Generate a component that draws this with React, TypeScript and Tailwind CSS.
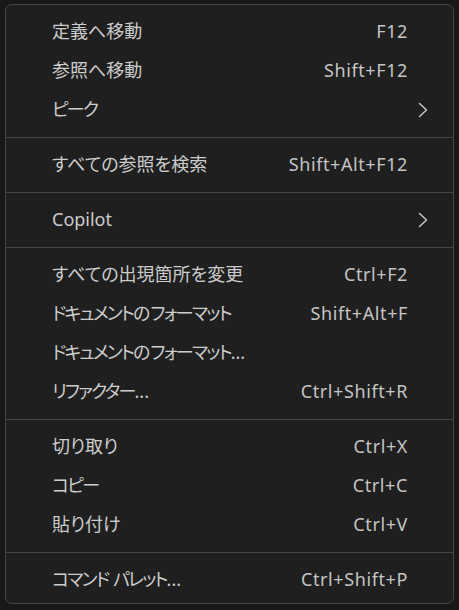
type Entry =
    | { kind: 'item'; label: string; shortcut?: string; submenu?: boolean }
    | { kind: 'sep' };

const entries: Entry[] = [
    { kind: 'item', label: '定義へ移動', shortcut: 'F12' },
    { kind: 'item', label: '参照へ移動', shortcut: 'Shift+F12' },
    { kind: 'item', label: 'ピーク', submenu: true },
    { kind: 'sep' },
    { kind: 'item', label: 'すべての参照を検索', shortcut: 'Shift+Alt+F12' },
    { kind: 'sep' },
    { kind: 'item', label: 'Copilot', submenu: true },
    { kind: 'sep' },
    { kind: 'item', label: 'すべての出現箇所を変更', shortcut: 'Ctrl+F2' },
    { kind: 'item', label: 'ドキュメントのフォーマット', shortcut: 'Shift+Alt+F' },
    { kind: 'item', label: 'ドキュメントのフォーマット...' },
    { kind: 'item', label: 'リファクター...', shortcut: 'Ctrl+Shift+R' },
    { kind: 'sep' },
    { kind: 'item', label: '切り取り', shortcut: 'Ctrl+X' },
    { kind: 'item', label: 'コピー', shortcut: 'Ctrl+C' },
    { kind: 'item', label: '貼り付け', shortcut: 'Ctrl+V' },
    { kind: 'sep' },
    { kind: 'item', label: 'コマンド パレット...', shortcut: 'Ctrl+Shift+P' },
];

// katakana in the UI font is narrower than in Noto CJK, so squeeze those runs a bit
function Label({ text }: { text: string }) {
    const runs = text.match(/[\u30a0-\u30ff]+|[^\u30a0-\u30ff]+/g) ?? [];
    return (
        <span className="flex-1 text-[18px] [font-feature-settings:'palt']">
            {runs.map((r, i) =>
                /[\u30a0-\u30ff]/.test(r) ? (
                    <span key={i} className="tracking-[-1.8px]">{r}</span>
                ) : (
                    <span key={i}>{r}</span>
                )
            )}
        </span>
    );
}

function Chevron() {
    return (
        <svg width="12" height="16" viewBox="0 0 12 16" fill="none" className="text-[#cccccc]">
            <path d="M2.5 1.5 L9.5 8 L2.5 14.5" stroke="currentColor" strokeWidth="1.4" strokeLinecap="round" strokeLinejoin="round" />
        </svg>
    );
}

export default function App() {
    return (
        <div className="w-[459px] h-[610px] bg-[#181818] pt-[4px] pl-[5px] font-['Noto_Sans','Noto_Sans_CJK_JP',sans-serif]">
            <div className="w-[449px] h-[600px] rounded-[7px] border border-[#454545] bg-[#1f1f1f] pt-[7px]">
                {entries.map((e, i) =>
                    e.kind === 'sep' ? (
                        <div key={i} className="h-[16px] flex items-center">
                            <div className="h-px w-full bg-[#454545]" />
                        </div>
                    ) : (
                        <div key={i} className="h-[39px] flex items-center pl-[46px] pr-[24px] text-[#cccccc]">
                            <Label text={e.label} />
                            {e.shortcut && <span className="mr-[21px] text-[18px] tracking-[0.6px] text-[#c4c4c4]">{e.shortcut}</span>}
                            {e.submenu && <Chevron />}
                        </div>
                    )
                )}
            </div>
        </div>
    );
}
